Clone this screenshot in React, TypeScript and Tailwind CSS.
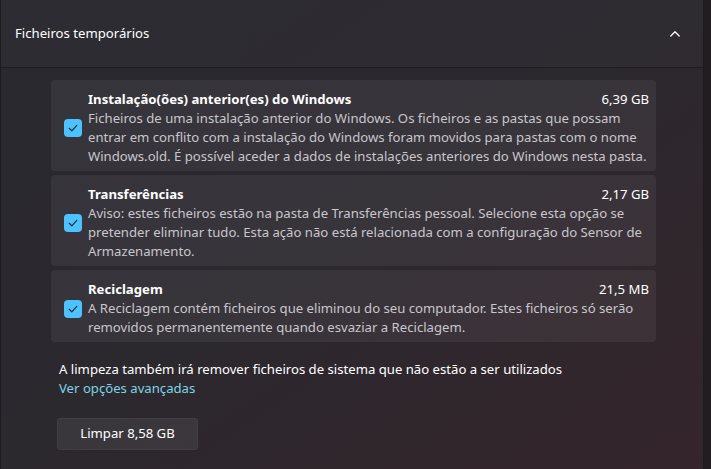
import React from "react";

const font = { fontFamily: '"Noto Sans", "Open Sans", sans-serif' };

function Check() {
  return (
    <div className="w-[18px] h-[18px] rounded-[4px] bg-[#4cc2ff] flex items-center justify-center shrink-0">
      <svg width="12" height="12" viewBox="0 0 12 12" fill="none">
        <path d="M2.2 6.3 L4.8 8.8 L9.8 3.4" stroke="#1b2a36" strokeWidth="1.2" strokeLinecap="round" strokeLinejoin="round" />
      </svg>
    </div>
  );
}

function Card({ title, size, lines }: { title: string; size: string; lines: string[] }) {
  return (
    <div className="flex items-center rounded-[4px] bg-white/[0.06] pl-[13px] pr-[7px] pt-[10px] pb-[5px]">
      <Check />
      <div className="ml-[6px] flex-1 flex flex-col">
        <div className="flex justify-between items-center h-[19px]">
          <span className="text-white font-bold text-[13.15px]">{title}</span>
          <span className="text-white text-[13.15px]">{size}</span>
        </div>
        {lines.map((l, i) => (
          <div key={i} className="h-[19px] leading-[19px] text-[13.15px] text-[#c9c6cc] whitespace-nowrap">{l}</div>
        ))}
      </div>
    </div>
  );
}

export default function App() {
  return (
    <div className="w-[711px] h-[469px] overflow-hidden bg-[#221d21] flex" style={font}>
      <div className="w-[704px] h-full flex flex-col border-l border-r border-[#1c1b20] bg-gradient-to-br from-[#2a2930] via-[#2b282e] to-[#34252b]">
        <div className="h-[68px] shrink-0 flex items-center justify-between pl-[14px] pr-[22px] bg-white/[0.015] border-b border-[#1d1c22]">
          <span className="text-white text-[13.15px]">Ficheiros temporários</span>
          <svg width="12" height="12" viewBox="0 0 12 12" fill="none">
            <path d="M1.8 8 L6 3.8 L10.2 8" stroke="#ffffff" strokeWidth="1.3" strokeLinecap="round" strokeLinejoin="round" />
          </svg>
        </div>
        <div className="flex flex-col pl-[50px] pr-[47px] pt-[12px]">
          <div className="flex flex-col gap-[4px]">
            <Card
              title="Instalação(ões) anterior(es) do Windows"
              size="6,39 GB"
              lines={[
                "Ficheiros de uma instalação anterior do Windows. Os ficheiros e as pastas que possam",
                "entrar em conflito com a instalação do Windows foram movidos para pastas com o nome",
                "Windows.old. É possível aceder a dados de instalações anteriores do Windows nesta pasta.",
              ]}
            />
            <Card
              title="Transferências"
              size="2,17 GB"
              lines={[
                "Aviso: estes ficheiros estão na pasta de Transferências pessoal. Selecione esta opção se",
                "pretender eliminar tudo. Esta ação não está relacionada com a configuração do Sensor de",
                "Armazenamento.",
              ]}
            />
            <Card
              title="Reciclagem"
              size="21,5 MB"
              lines={[
                "A Reciclagem contém ficheiros que eliminou do seu computador. Estes ficheiros só serão",
                "removidos permanentemente quando esvaziar a Reciclagem.",
              ]}
            />
          </div>
          <div className="mt-[18px] pl-[8px] text-[13.15px] leading-[19px] text-white whitespace-nowrap">
            A limpeza também irá remover ficheiros de sistema que não estão a ser utilizados
          </div>
          <div className="pl-[8px] text-[13.15px] leading-[19px] text-[#7fd3e6]">Ver opções avançadas</div>
          <div className="mt-[20px] ml-[6px] w-[141px] h-[32px] rounded-[4px] bg-white/[0.07] border border-white/[0.04] flex items-center justify-center text-white text-[13.15px]">
            Limpar 8,58 GB
          </div>
        </div>
      </div>
    </div>
  );
}
